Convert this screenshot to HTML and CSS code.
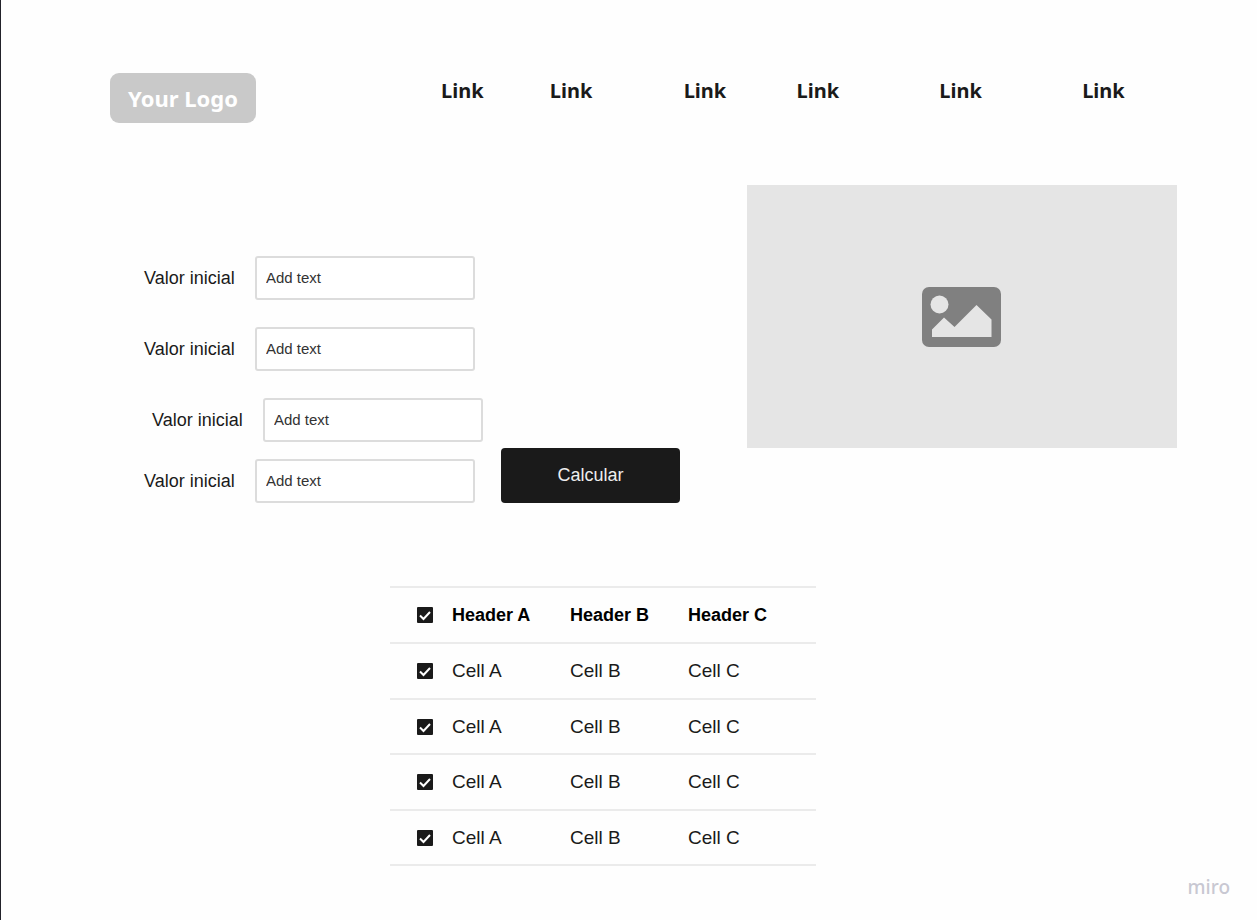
FILE: index.html
```html
<!DOCTYPE html>
<html lang="es">
<head>
<meta charset="utf-8">
<meta name="viewport" content="width=device-width, initial-scale=1">
<title>Calculadora</title>
<link rel="stylesheet" href="styles.css">
</head>
<body>
<header class="header">
  <a class="logo" href="#">Your Logo</a>
  <nav class="nav">
    <a href="#">Link</a>
    <a href="#">Link</a>
    <a href="#">Link</a>
    <a href="#">Link</a>
    <a href="#">Link</a>
    <a href="#">Link</a>
  </nav>
</header>
<main>
  <section class="hero">
    <form class="form">
      <div class="fields">
        <div class="field"><label for="v1">Valor inicial</label><input id="v1" type="text" placeholder="Add text"></div>
        <div class="field"><label for="v2">Valor inicial</label><input id="v2" type="text" placeholder="Add text"></div>
        <div class="field field-inset"><label for="v3">Valor inicial</label><input id="v3" type="text" placeholder="Add text"></div>
        <div class="field"><label for="v4">Valor inicial</label><input id="v4" type="text" placeholder="Add text"></div>
      </div>
      <button class="submit" type="button">Calcular</button>
    </form>
    <div class="picture">
      <svg width="80" height="60" viewBox="0 0 80 60" role="img" aria-label="Imagen">
        <rect width="79" height="60" x="0" y="0" rx="7" fill="#808080"/>
        <circle cx="17.5" cy="17.5" r="9" fill="#e5e5e5"/>
        <path d="M10 50V42.500L22 30.500L32.500 40L54.500 18L69.500 32.500V50Z" fill="#e5e5e5"/>
      </svg>
    </div>
  </section>
  <table class="table">
    <thead>
      <tr><th class="pick"><input type="checkbox" aria-label="Todas" checked></th><th class="col">Header A</th><th class="col">Header B</th><th>Header C</th></tr>
    </thead>
    <tbody>
      <tr><td class="pick"><input type="checkbox" aria-label="Fila 1" checked></td><td>Cell A</td><td>Cell B</td><td>Cell C</td></tr>
      <tr><td class="pick"><input type="checkbox" aria-label="Fila 2" checked></td><td>Cell A</td><td>Cell B</td><td>Cell C</td></tr>
      <tr><td class="pick"><input type="checkbox" aria-label="Fila 3" checked></td><td>Cell A</td><td>Cell B</td><td>Cell C</td></tr>
      <tr><td class="pick"><input type="checkbox" aria-label="Fila 4" checked></td><td>Cell A</td><td>Cell B</td><td>Cell C</td></tr>
    </tbody>
  </table>
</main>
<footer class="footer">miro</footer>
</body>
</html>
```
FILE: styles.css
```css
* {
  box-sizing: border-box;
}

body {
  margin: 0;
  min-height: 100vh;
  border-left: 1px solid #22222a;
  background: #fefefe;
  color: #1a1a1a;
  font: 18px/24px "Liberation Sans", Arial, sans-serif;
}

.header {
  display: flex;
  gap: 185px;
  padding: 73px 80px 0 109px;
}

.logo {
  padding: 10px 18px;
  border-radius: 9px;
  background: #c9c9c9;
  color: #fff;
  font: 700 22px/30px "Noto Sans", sans-serif;
  white-space: nowrap;
  text-decoration: none;
}

.nav {
  flex: 1;
  display: grid;
  grid-template-columns: 109fr 134fr 113fr 143fr 143fr 95fr;
  padding-top: 4px;
}

.nav a {
  color: #1a1a1a;
  font: 700 20px/28px "Noto Sans", sans-serif;
  text-decoration: none;
}

.hero {
  display: flex;
  justify-content: space-between;
  align-items: flex-start;
  gap: 24px;
  padding: 62px 80px 0 143px;
}

.form {
  display: flex;
  align-items: flex-end;
  gap: 18px;
  padding-top: 71px;
}

.fields {
  display: flex;
  flex-direction: column;
}

.field {
  display: flex;
  align-items: center;
  gap: 18px;
  margin-bottom: 27px;
  padding-right: 8px;
}

.field-inset {
  margin-bottom: 17px;
  padding-right: 0;
  padding-left: 8px;
}

.field:last-child {
  margin-bottom: 0;
}

.field label {
  width: 93px;
  white-space: nowrap;
}

.field input {
  width: 220px;
  height: 44px;
  padding: 0 9px 2px;
  border: 2px solid #dcdcdc;
  border-radius: 3px;
  background: #fff;
  color: #333;
  font: 15px "Liberation Sans", Arial, sans-serif;
}

.field input::placeholder {
  color: #333;
}

.submit {
  width: 179px;
  height: 55px;
  border: 0;
  border-radius: 4px;
  background: #1a1a1a;
  color: #eee;
  font: 18px "Liberation Sans", Arial, sans-serif;
}

.picture {
  flex: 0 1 430px;
  display: flex;
  align-items: center;
  justify-content: center;
  height: 263px;
  background: #e5e5e5;
}

.table {
  width: 426px;
  margin: 83px 0 0 389px;
  border-collapse: collapse;
  table-layout: fixed;
}

.table tr {
  height: 56px;
  border-top: 2px solid #ebebeb;
  border-bottom: 2px solid #ebebeb;
}

.table tbody tr:nth-child(even) {
  height: 55px;
}

.table th,
.table td {
  padding: 0;
  text-align: left;
}

.table th {
  color: #000;
}

.table td {
  font-size: 19px;
}

.table .pick {
  width: 62px;
  padding-left: 27px;
}

.table .col {
  width: 118px;
}

.pick input {
  appearance: none;
  display: block;
  width: 16px;
  height: 16px;
  margin: 0;
  border-radius: 1px;
  background: #1a1a1a url("data:image/svg+xml,%3Csvg xmlns='http://www.w3.org/2000/svg' viewBox='0 0 16 16'%3E%3Cpath d='M3 8.500L6.500 12L13 5' fill='none' stroke='white' stroke-width='2'/%3E%3C/svg%3E");
}

.footer {
  padding: 8px 27px 0 0;
  color: #c8c8d2;
  font: 500 19px/26px "Noto Sans", sans-serif;
  text-align: right;
}
```
